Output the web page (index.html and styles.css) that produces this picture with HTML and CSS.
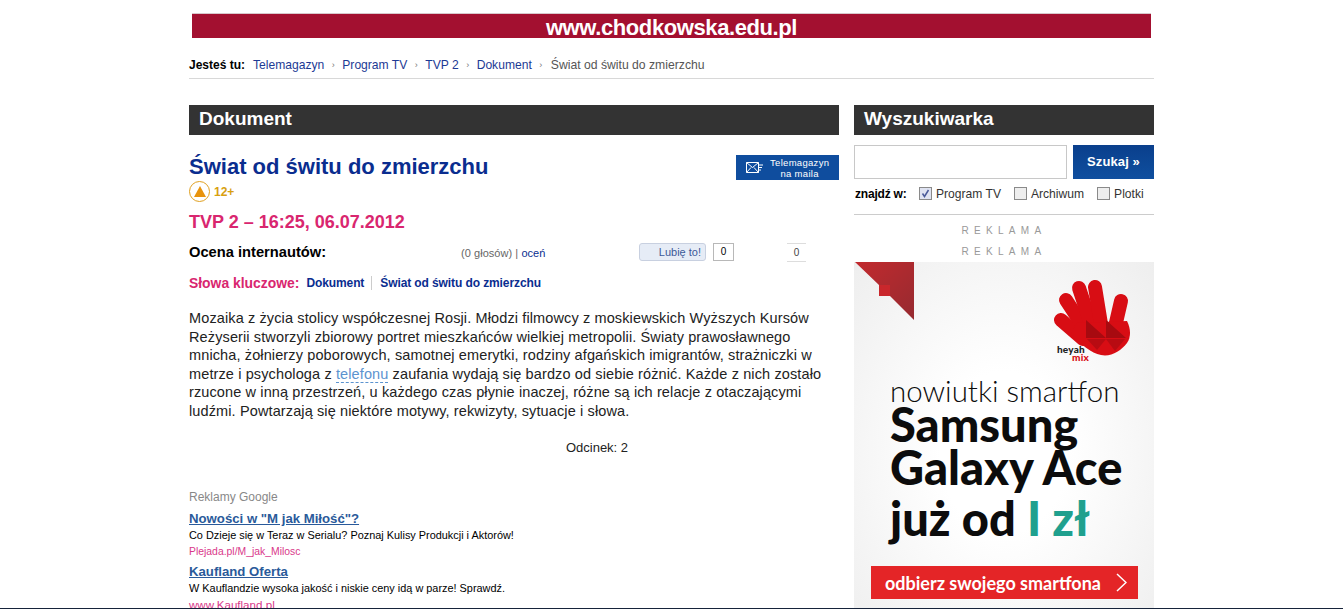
FILE: index.html
```html
<!DOCTYPE html>
<html lang="pl">
<head>
    <meta charset="UTF-8">
    <title>Świat od świtu do zmierzchu</title>
    <link rel="stylesheet" href="styles.css">
</head>
<body>
    <div class="viewport">
        <div class="page">
            <div class="banner">www.chodkowska.edu.pl</div>

            <div class="breadcrumb">
                <strong>Jesteś tu:</strong>
                <a href="#">Telemagazyn</a><span class="sep">›</span>
                <a href="#">Program TV</a><span class="sep">›</span>
                <a href="#">TVP 2</a><span class="sep">›</span>
                <a href="#">Dokument</a><span class="sep">›</span>
                <span class="current">Świat od świtu do zmierzchu</span>
            </div>

            <div class="columns">
                <div class="main">
                    <h2 class="bar">Dokument</h2>

                    <div class="title-row">
                        <div>
                            <h1>Świat od świtu do zmierzchu</h1>
                            <div class="age">
                                <span class="age-icon"><svg width="12" height="11" viewBox="0 0 12 11"><path d="M6 0 12 11H0Z" fill="#e8930c"/></svg></span>
                                <span>12+</span>
                            </div>
                        </div>
                        <a href="#" class="mail-btn">
                            <svg width="17" height="11" viewBox="0 0 17 11" fill="none" stroke="#fff" stroke-width="1">
                                <path d="M.5.5h12v10H.5zM.5.5l6 5 6-5M.5 10.5l4.500-5M12.500 10.500l-4.500-5M13 3h4M13 5.500h3M13 8h2"/>
                            </svg>
                            <span>Telemagazyn<br>na maila</span>
                        </a>
                    </div>

                    <div class="airing">TVP 2 – 16:25, 06.07.2012</div>

                    <div class="rating-row">
                        <strong class="rating-label">Ocena internautów:</strong>
                        <span class="votes">(0 głosów) | <a href="#">oceń</a></span>
                        <span class="like-btn">Lubię to!</span>
                        <span class="like-count">0</span>
                        <span class="share-count">0</span>
                    </div>

                    <div class="keywords">
                        <strong>Słowa kluczowe:</strong>
                        <a href="#" class="kw-first">Dokument</a>
                        <a href="#">Świat od świtu do zmierzchu</a>
                    </div>

                    <p class="description">Mozaika z życia stolicy współczesnej Rosji. Młodzi filmowcy z moskiewskich Wyższych Kursów Reżyserii stworzyli zbiorowy portret mieszkańców wielkiej metropolii. Światy prawosławnego mnicha, żołnierzy poborowych, samotnej emerytki, rodziny afgańskich imigrantów, strażniczki w metrze i psychologa z <a href="#" class="hint">telefonu</a> zaufania wydają się bardzo od siebie różnić. Każde z nich zostało rzucone w inną przestrzeń, u każdego czas płynie inaczej, różne są ich relacje z otaczającymi ludźmi. Powtarzają się niektóre motywy, rekwizyty, sytuacje i słowa.</p>

                    <p class="episode">Odcinek: 2</p>

                    <div class="google-ads">
                        <div class="ads-label">Reklamy Google</div>
                        <a href="#" class="ad-title">Nowości w "M jak Miłość"?</a>
                        <div class="ad-text">Co Dzieje się w Teraz w Serialu? Poznaj Kulisy Produkcji i Aktorów!</div>
                        <div class="ad-url">Plejada.pl/M_jak_Milosc</div>
                        <a href="#" class="ad-title">Kaufland Oferta</a>
                        <div class="ad-text">W Kauflandzie wysoka jakość i niskie ceny idą w parze! Sprawdź.</div>
                        <div class="ad-url ad-url-wide">www.Kaufland.pl</div>
                    </div>
                </div>

                <div class="side">
                    <h2 class="bar">Wyszukiwarka</h2>

                    <div class="search-row">
                        <input type="text" class="search-input">
                        <button type="button" class="search-btn">Szukaj »</button>
                    </div>

                    <div class="search-opts">
                        <strong>znajdź w:</strong>
                        <label><span class="check checked"><svg width="9" height="9" viewBox="0 0 9 9" fill="none" stroke="#4a5a9a" stroke-width="1.500"><path d="M1.500 4.500 3.500 7.500 7.500 1"/></svg></span>Program TV</label>
                        <label><span class="check"></span>Archiwum</label>
                        <label><span class="check"></span>Plotki</label>
                    </div>

                    <div class="ad-label first">REKLAMA</div>
                    <div class="ad-label">REKLAMA</div>

                    <div class="promo">
                        <svg class="promo-corner" width="59" height="58" viewBox="0 0 59 58">
                            <defs>
                                <linearGradient id="cornerFill" x1="0" y1="0" x2="1" y2="1">
                                    <stop offset="0" stop-color="#c22a2e"/>
                                    <stop offset="1" stop-color="#962a30"/>
                                </linearGradient>
                            </defs>
                            <path d="M0 0H59V58L35 34H24V23Z" fill="url(#cornerFill)"/>
                            <path d="M24 23H35V34H24Z" fill="#c9272c"/>
                        </svg>
                        <div class="promo-logo">
                            <svg width="80" height="78" viewBox="0 0 80 78">
                                <g stroke="#d80d14" stroke-width="14" stroke-linecap="round">
                                    <path d="M8 41 30 60"/>
                                    <path d="M13 21 32 50"/>
                                    <path d="M26 9 38 45"/>
                                    <path d="M42 8 48 45"/>
                                    <path d="M68 22 62 48"/>
                                </g>
                                <path d="M24 44 74 42C78 50 78 58 74 64 68 72 58 78 48 76 38 74 28 66 18 54Z" fill="#d80d14"/>
                                <path d="M33 41 43 50 33 59ZM33 59H53L43 50ZM53 41 63 50 53 59ZM53 59H73L63 50Z" fill="#a70a10"/>
                                <path d="M34 60H53L44 71ZM53 60H72L62 72Z" fill="#b80b12"/>
                            </svg>
                            <div class="heyah">heyah<span class="mix">mix</span></div>
                        </div>
                        <div class="promo-copy">
                            <div class="promo-lead">nowiutki smartfon</div>
                            <div class="promo-big">Samsung</div>
                            <div class="promo-big">Galaxy Ace</div>
                            <div class="promo-big promo-last">już od <span class="promo-price">I zł</span></div>
                        </div>
                        <div class="promo-cta">
                            <span>odbierz swojego smartfona</span>
                            <svg width="11" height="19" viewBox="0 0 11 19" fill="none" stroke="#fff" stroke-width="1.500"><path d="M1 1l9 8.500-9 8.500"/></svg>
                        </div>
                    </div>
                </div>
            </div>
        </div>
    </div>
    <div class="bottom-line"></div>
</body>
</html>
```

FILE: styles.css
```css
html, body {
    height: 100%;
    margin: 0;
}

body {
    display: flex;
    flex-direction: column;
    overflow: hidden;
    background-color: #fff;
    font-family: "Liberation Sans", Arial, sans-serif;
    font-size: 12px;
    color: #000;
}

a {
    color: #0a2d8f;
    text-decoration: none;
}

.viewport {
    flex: 1;
    min-height: 0;
    overflow: hidden;
}

.bottom-line {
    height: 1px;
    background-color: #16233a;
}

.page {
    width: 965px;
    margin-left: 189px;
    padding-top: 13px;
}

.banner {
    height: 24px;
    margin: 0 3px;
    border-top: 1px solid #d8c8cc;
    background-color: #a31030;
    color: #fff;
    font-size: 22px;
    font-weight: bold;
    line-height: 28px;
    letter-spacing: -0.4px;
    text-align: center;
}

.breadcrumb {
    display: flex;
    align-items: center;
    height: 41px;
    margin-bottom: 26px;
    padding-top: 13px;
    box-sizing: border-box;
    border-bottom: 1px solid #d8d8d8;
    white-space: nowrap;
}

.breadcrumb strong {
    margin-right: 8px;
}

.breadcrumb a {
    color: #1c3a94;
    font-size: 12.100px;
}

.sep {
    width: 18px;
    color: #777;
    font-size: 9px;
    text-align: center;
}

.current {
    margin-left: 1px;
    color: #555;
    font-size: 12.200px;
}

.columns {
    display: flex;
    gap: 15px;
}

.main {
    width: 650px;
}

.side {
    width: 300px;
}

.bar {
    height: 30px;
    margin: 0;
    padding-left: 10px;
    background-color: #333;
    color: #fff;
    font-size: 19px;
    font-weight: bold;
    line-height: 28px;
}

.title-row {
    display: flex;
    justify-content: space-between;
    align-items: flex-start;
    padding-top: 17px;
}

h1 {
    margin: 0;
    color: #0a2d8f;
    font-size: 22px;
    line-height: 29px;
}

.mail-btn {
    display: flex;
    align-items: center;
    gap: 7px;
    width: 103px;
    height: 25px;
    margin-top: 3px;
    padding-left: 10px;
    box-sizing: border-box;
    background-color: #0f4d9e;
    color: #fff;
    font-size: 9.500px;
    line-height: 11px;
    letter-spacing: 0.3px;
    text-align: center;
}

.age {
    display: flex;
    align-items: center;
    gap: 4px;
    color: #d8a010;
    font-size: 12px;
    font-weight: bold;
}

.age-icon {
    display: flex;
    justify-content: center;
    align-items: center;
    width: 19px;
    height: 19px;
    border: 1px solid #e0a020;
    border-radius: 50%;
}

.airing {
    margin-top: 9px;
    color: #d9266f;
    font-size: 18px;
    font-weight: bold;
    line-height: 22px;
}

.rating-row {
    display: flex;
    align-items: center;
    height: 20px;
    margin-top: 9px;
}

.rating-label {
    width: 272px;
    font-size: 14.700px;
}

.votes {
    width: 178px;
    padding-top: 2px;
    color: #666;
    font-size: 11px;
    letter-spacing: 0.05px;
}

.votes a {
    color: #0a2d8f;
}

.like-btn {
    width: 67px;
    height: 18px;
    border: 1px solid #c8d0e0;
    border-radius: 3px;
    box-sizing: border-box;
    padding-right: 4px;
    background-color: #e6ecf6;
    color: #3b5998;
    font-size: 11px;
    line-height: 16px;
    text-align: right;
}

.like-count {
    width: 21px;
    height: 18px;
    margin-left: 7px;
    border: 1px solid #b8b8b8;
    box-sizing: border-box;
    font-size: 10px;
    line-height: 16px;
    text-align: center;
}

.share-count {
    width: 19px;
    height: 19px;
    margin-left: 53px;
    border-top: 1px solid #ddd;
    border-bottom: 1px solid #ddd;
    box-sizing: border-box;
    color: #444;
    font-size: 10px;
    line-height: 17px;
    text-align: center;
}

.keywords {
    display: flex;
    align-items: center;
    height: 16px;
    margin-top: 13px;
}

.keywords strong {
    margin-right: 7px;
    color: #d9266f;
    font-size: 13.900px;
}

.keywords a {
    font-weight: bold;
    font-size: 12px;
    letter-spacing: -0.1px;
}

.kw-first {
    margin-right: 8px;
    padding-right: 7px;
    border-right: 1px solid #ccc;
}

.description {
    margin: 18px 0 0;
    width: 640px;
    font-size: 14.500px;
    letter-spacing: 0.12px;
    line-height: 18.500px;
    color: #222;
}

.hint {
    color: #5b93cf;
    border-bottom: 1px dashed #5b93cf;
}

.episode {
    margin: 19px 0 0;
    padding-left: 166px;
    font-size: 13px;
    line-height: 18px;
    color: #222;
    text-align: center;
}

.google-ads {
    margin-top: 33px;
}

.ads-label {
    color: #888;
    font-size: 12px;
    line-height: 14px;
    margin-bottom: 6px;
}

.ad-title {
    display: block;
    color: #2a5a9a;
    font-size: 13.200px;
    font-weight: bold;
    line-height: 17px;
    text-decoration: underline;
}

.ad-text {
    font-size: 10.900px;
    line-height: 17px;
}

.ad-url {
    margin-bottom: 4px;
    color: #d9388a;
    font-size: 10.400px;
    line-height: 15px;
}

.ad-url-wide {
    font-size: 11.600px;
}

.search-row {
    display: flex;
    justify-content: space-between;
    margin-top: 10px;
}

.search-input {
    width: 213px;
    height: 34px;
    padding: 0;
    border: 1px solid #c8c8c8;
    box-sizing: border-box;
}

.search-btn {
    width: 81px;
    height: 34px;
    padding: 0 0 2px;
    border: 0;
    background: linear-gradient(#0a3f8c, #0f4f9f);
    color: #fff;
    font-family: inherit;
    font-size: 13px;
    font-weight: bold;
    letter-spacing: 0.1px;
}

.search-opts {
    display: flex;
    align-items: center;
    height: 21px;
    margin-top: 4px;
    padding-bottom: 10px;
    border-bottom: 1px solid #ccc;
    white-space: nowrap;
}

.search-opts strong {
    flex: none;
    width: 64px;
    padding-left: 1px;
    letter-spacing: -0.2px;
}

.search-opts label {
    display: flex;
    flex: none;
    align-items: center;
    margin-right: 13px;
    color: #333;
    font-size: 12.100px;
}

.search-opts label:last-child {
    margin-right: 0;
}

.check {
    display: flex;
    justify-content: center;
    align-items: center;
    width: 13px;
    height: 13px;
    margin-right: 4px;
    border: 1px solid #8a8a8a;
    box-sizing: border-box;
    background-color: #eee;
}

.checked {
    background-color: #dfe3f2;
}

.ad-label {
    color: #999;
    font-size: 10px;
    line-height: 21px;
    letter-spacing: 5.300px;
    text-align: center;
}

.ad-label.first {
    margin-top: 5px;
}

.promo {
    position: relative;
    display: flex;
    flex-direction: column;
    height: 346px;
    background: radial-gradient(ellipse at 50% 55%, #fff 30%, #eeeeee 100%);
    overflow: hidden;
}

.promo-corner {
    position: absolute;
    left: 1px;
    top: 0;
}

.promo-logo {
    position: absolute;
    right: 21px;
    top: 17px;
    width: 80px;
}

.heyah {
    position: absolute;
    left: 4px;
    top: 66px;
    font-family: Lato, sans-serif;
    font-size: 10px;
    font-weight: 900;
    line-height: 9px;
    letter-spacing: 0.2px;
    color: #222;
}

.mix {
    display: block;
    margin-left: 15px;
    margin-top: -1px;
    color: #d80d14;
}

.promo-copy {
    margin-top: 117px;
    padding-left: 36px;
    font-family: Lato, sans-serif;
    color: #0c0c0c;
    white-space: nowrap;
}

.promo-lead {
    font-size: 29.500px;
    font-weight: 300;
    line-height: 24px;
}

.promo-big {
    font-size: 47px;
    font-weight: 900;
    line-height: 43px;
}

.promo-last {
    margin-top: 8px;
}

.promo-price {
    color: #1fa08e;
}

.promo-cta {
    display: flex;
    justify-content: space-between;
    align-items: center;
    width: 267px;
    height: 33px;
    margin: 26px 0 0 17px;
    padding: 0 11px 0 14px;
    box-sizing: border-box;
    background-color: #e42527;
    color: #fff;
    font-family: Lato, sans-serif;
    font-size: 18px;
    font-weight: bold;
}
```
